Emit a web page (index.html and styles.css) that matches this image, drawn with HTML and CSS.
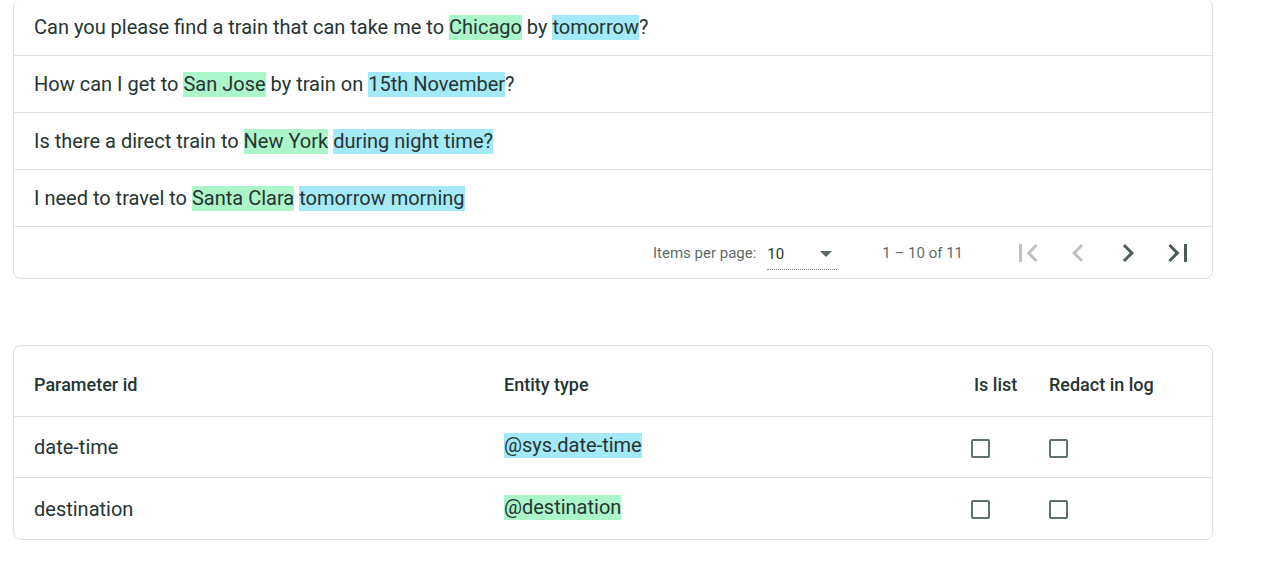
FILE: index.html
```html
<!DOCTYPE html>
<html lang="en">
<head>
<meta charset="utf-8">
<title>Training phrases</title>
<link rel="stylesheet" href="styles.css">
</head>
<body>
<div class="page">
  <section class="card examples">
    <div class="phrase">Can you please find a train that can take me to&nbsp;<span class="hl green">Chicago</span>&nbsp;by&nbsp;<span class="hl blue">tomorrow</span>?</div>
    <div class="phrase">How can I get to&nbsp;<span class="hl green">San Jose</span>&nbsp;by train on&nbsp;<span class="hl blue">15th November</span>?</div>
    <div class="phrase">Is there a direct train to&nbsp;<span class="hl green">New York</span>&nbsp;<span class="hl blue">during night time?</span></div>
    <div class="phrase">I need to travel to&nbsp;<span class="hl green">Santa Clara</span>&nbsp;<span class="hl blue">tomorrow morning</span></div>
    <div class="paginator">
      <span class="pg-label">Items per page:</span>
      <div class="pg-select"><span class="pg-value">10</span><span class="pg-arrow"></span></div>
      <span class="pg-range">1 – 10 of 11</span>
      <div class="pg-buttons">
        <button class="pg-btn disabled" aria-label="First page"><svg viewBox="0 0 24 24" width="36" height="36"><path d="M18.41 16.59L13.82 12l4.59-4.59L17 6l-6 6 6 6zM6 6h2v12H6z"/></svg></button>
        <button class="pg-btn disabled" aria-label="Previous page"><svg viewBox="0 0 24 24" width="36" height="36"><path d="M15.41 7.41L14 6l-6 6 6 6 1.41-1.41L10.83 12z"/></svg></button>
        <button class="pg-btn" aria-label="Next page"><svg viewBox="0 0 24 24" width="36" height="36"><path d="M10 6L8.59 7.41 13.17 12l-4.58 4.59L10 18l6-6z"/></svg></button>
        <button class="pg-btn" aria-label="Last page"><svg viewBox="0 0 24 24" width="36" height="36"><path d="M5.59 7.41L10.18 12l-4.59 4.59L7 18l6-6-6-6zM16 6h2v12h-2z"/></svg></button>
      </div>
    </div>
  </section>

  <section class="card params">
    <div class="prow head">
      <div class="cell">Parameter id</div>
      <div class="cell">Entity type</div>
      <div class="cell islist">Is list</div>
      <div class="cell">Redact in log</div>
    </div>
    <div class="prow">
      <div class="cell">date-time</div>
      <div class="cell"><span class="hl blue">@sys.date-time</span></div>
      <div class="cell"><span class="cb"></span></div>
      <div class="cell"><span class="cb"></span></div>
    </div>
    <div class="prow last">
      <div class="cell">destination</div>
      <div class="cell"><span class="hl green">@destination</span></div>
      <div class="cell"><span class="cb"></span></div>
      <div class="cell"><span class="cb"></span></div>
    </div>
  </section>
</div>
</body>
</html>
```

FILE: styles.css
```css
* { box-sizing: border-box; }

body {
  margin: 0;
  background: #ffffff;
  font-family: Roboto, "Liberation Sans", Arial, sans-serif;
  color: #263432;
}

.page {
  padding-left: 13px;
  width: 1213px;
}

.card {
  width: 1200px;
  border: 1px solid #e0e0e0;
  border-radius: 8px;
  background: #fff;
  overflow: hidden;
}

.examples {
  margin-top: -2px;
}

.phrase {
  height: 57px;
  display: flex;
  align-items: center;
  padding: 0 20px;
  border-bottom: 1px solid #e2e2e2;
  font-size: 20px;
  white-space: nowrap;
}

.hl {
  display: inline-block;
  line-height: 25px;
}

.green { background: #abf5c8; }
.blue { background: #a4e9f7; }

.paginator {
  height: 51px;
  display: flex;
  align-items: center;
  justify-content: flex-end;
  padding-right: 14px;
  font-size: 15px;
  color: #5f6b69;
}

.pg-label {
  margin-right: 11px;
}

.pg-select {
  width: 70px;
  height: 28px;
  display: flex;
  align-items: center;
  justify-content: space-between;
  border-bottom: 1px dotted #7d8886;
  margin-top: 6px;
  padding: 0 5px 2px 0;
  color: #263432;
}

.pg-arrow {
  width: 0;
  height: 0;
  border-left: 6px solid transparent;
  border-right: 6px solid transparent;
  border-top: 6px solid #5a6866;
}

.pg-range {
  margin-left: 45px;
  margin-right: 45px;
}

.pg-buttons {
  display: flex;
  gap: 10px;
}

.pg-btn {
  width: 40px;
  height: 40px;
  padding: 0;
  border: 0;
  background: none;
  display: flex;
  align-items: center;
  justify-content: center;
  fill: #4b5b58;
}

.pg-btn.disabled {
  fill: #bcc3c2;
}

.params {
  margin-top: 66px;
}

.prow {
  display: grid;
  grid-template-columns: 470px 467px 78px 1fr;
  align-items: center;
  padding-left: 20px;
  height: 61px;
  border-bottom: 1px solid #e2e2e2;
  font-size: 20px;
}

.prow.head {
  height: 71px;
  padding-top: 6px;
  font-size: 18px;
  font-weight: 500;
}

.prow.last {
  border-bottom: 0;
}

.prow .cell {
  white-space: nowrap;
}

.prow:not(.head) .hl {
  margin-bottom: 3px;
}

.islist {
  padding-left: 3px;
}

.cb {
  display: block;
  width: 19px;
  height: 19px;
  border: 2px solid #5f716e;
  border-radius: 2px;
  margin-top: 2px;
}
```
